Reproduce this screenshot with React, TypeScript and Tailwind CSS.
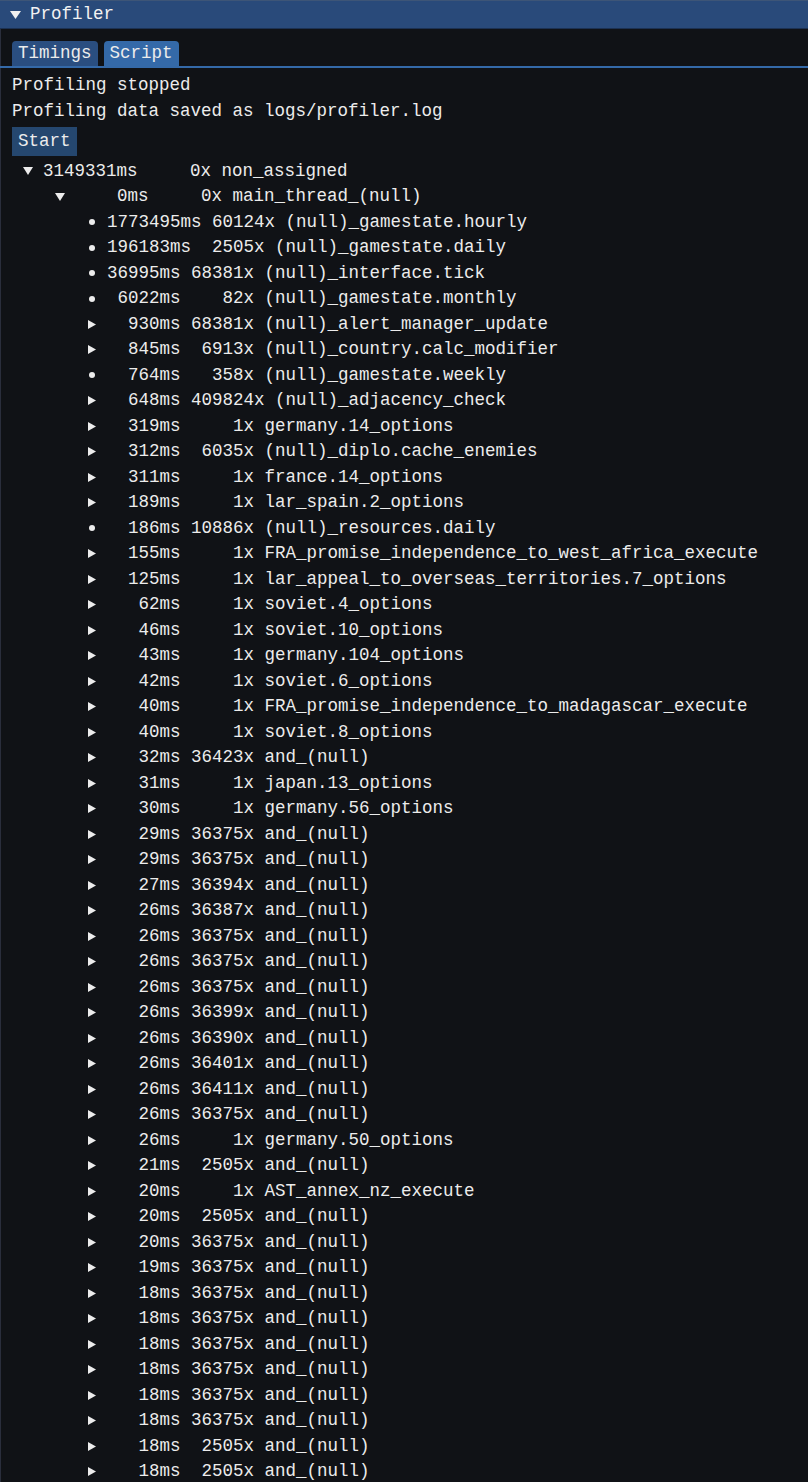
import React from "react";

type Kind = "bullet" | "arrow";
const rows: [Kind, number, number, string][] = [
  ["bullet", 1773495, 60124, "(null)_gamestate.hourly"],
  ["bullet", 196183, 2505, "(null)_gamestate.daily"],
  ["bullet", 36995, 68381, "(null)_interface.tick"],
  ["bullet", 6022, 82, "(null)_gamestate.monthly"],
  ["arrow", 930, 68381, "(null)_alert_manager_update"],
  ["arrow", 845, 6913, "(null)_country.calc_modifier"],
  ["bullet", 764, 358, "(null)_gamestate.weekly"],
  ["arrow", 648, 409824, "(null)_adjacency_check"],
  ["arrow", 319, 1, "germany.14_options"],
  ["arrow", 312, 6035, "(null)_diplo.cache_enemies"],
  ["arrow", 311, 1, "france.14_options"],
  ["arrow", 189, 1, "lar_spain.2_options"],
  ["bullet", 186, 10886, "(null)_resources.daily"],
  ["arrow", 155, 1, "FRA_promise_independence_to_west_africa_execute"],
  ["arrow", 125, 1, "lar_appeal_to_overseas_territories.7_options"],
  ["arrow", 62, 1, "soviet.4_options"],
  ["arrow", 46, 1, "soviet.10_options"],
  ["arrow", 43, 1, "germany.104_options"],
  ["arrow", 42, 1, "soviet.6_options"],
  ["arrow", 40, 1, "FRA_promise_independence_to_madagascar_execute"],
  ["arrow", 40, 1, "soviet.8_options"],
  ["arrow", 32, 36423, "and_(null)"],
  ["arrow", 31, 1, "japan.13_options"],
  ["arrow", 30, 1, "germany.56_options"],
  ["arrow", 29, 36375, "and_(null)"],
  ["arrow", 29, 36375, "and_(null)"],
  ["arrow", 27, 36394, "and_(null)"],
  ["arrow", 26, 36387, "and_(null)"],
  ["arrow", 26, 36375, "and_(null)"],
  ["arrow", 26, 36375, "and_(null)"],
  ["arrow", 26, 36375, "and_(null)"],
  ["arrow", 26, 36399, "and_(null)"],
  ["arrow", 26, 36390, "and_(null)"],
  ["arrow", 26, 36401, "and_(null)"],
  ["arrow", 26, 36411, "and_(null)"],
  ["arrow", 26, 36375, "and_(null)"],
  ["arrow", 26, 1, "germany.50_options"],
  ["arrow", 21, 2505, "and_(null)"],
  ["arrow", 20, 1, "AST_annex_nz_execute"],
  ["arrow", 20, 2505, "and_(null)"],
  ["arrow", 20, 36375, "and_(null)"],
  ["arrow", 19, 36375, "and_(null)"],
  ["arrow", 18, 36375, "and_(null)"],
  ["arrow", 18, 36375, "and_(null)"],
  ["arrow", 18, 36375, "and_(null)"],
  ["arrow", 18, 36375, "and_(null)"],
  ["arrow", 18, 36375, "and_(null)"],
  ["arrow", 18, 36375, "and_(null)"],
  ["arrow", 18, 2505, "and_(null)"],
  ["arrow", 18, 2505, "and_(null)"],
];

const fmt = (ms: number, c: number, name: string) =>
  `${String(ms).padStart(5)}ms ${String(c).padStart(5)}x ${name}`;

const Down = () => (
  <svg width="10" height="8" viewBox="0 0 10 8">
    <polygon points="0,0 10,0 5,8" fill="#ececec" />
  </svg>
);
const Right = () => (
  <svg width="8" height="9" viewBox="0 0 8 9">
    <polygon points="0,0 8,4.5 0,9" fill="#ececec" />
  </svg>
);
const Bullet = () => <div className="w-[6px] h-[6px] rounded-full bg-[#ececec]" />;

function Row({ depth, icon, text }: { depth: 0 | 1 | 2; icon: React.ReactNode; text: string }) {
  const pl = depth === 0 ? "pl-0" : depth === 1 ? "pl-[32px]" : "pl-[64px]";
  return (
    <div className={`flex items-center h-[19.5px] ${pl}`}>
      <div className="w-[31px] h-full flex items-center justify-center">{icon}</div>
      <div className="whitespace-pre leading-[19.5px]">{text}</div>
    </div>
  );
}

export default function App() {
  return (
    <div
      className="relative w-[808px] h-[1482px] overflow-hidden bg-[#101216] text-[#ececec] text-[17.5px] shadow-[inset_1px_0_0_#2a2e3c]"
      style={{ fontFamily: '"Liberation Mono", monospace' }}
    >
      <div className="h-[28px] bg-[#294a7a] border-t border-[#3d5577] flex items-center">
        <div className="w-[30px] flex justify-center">
          <svg width="11" height="8" viewBox="0 0 11 8">
            <polygon points="0,0 11,0 5.5,8" fill="#f0f0f0" />
          </svg>
        </div>
        <span className="leading-[19.5px] text-[#f2f2f2]">Profiler</span>
      </div>
      <div className="h-px bg-[#1c3152]" />
      <div className="pt-[12px]">
        <div className="flex gap-[6px] px-[12px] h-[27px] border-b-2 border-[#3469a8] items-end">
          <div className="h-[25px] px-[6px] bg-[#2a4e80] rounded-t-[4px] leading-[25px]">Timings</div>
          <div className="h-[25px] px-[6px] bg-[#3469a8] rounded-t-[4px] leading-[25px]">Script</div>
        </div>
        <div className="flex flex-col gap-[6px] px-[12px] pt-[8px]">
          <div className="h-[19.5px] leading-[19.5px] whitespace-pre">Profiling stopped</div>
          <div className="h-[19.5px] leading-[19.5px] whitespace-pre">Profiling data saved as logs/profiler.log</div>
          <div className="flex">
            <div className="h-[28.5px] leading-[28.5px] px-[6px] bg-[#25476f]">Start</div>
          </div>
          <Row depth={0} icon={<Down />} text={"3149331ms     0x non_assigned"} />
          <Row depth={1} icon={<Down />} text={fmt(0, 0, "main_thread_(null)")} />
          {rows.map(([k, ms, c, name], i) => (
            <Row key={i} depth={2} icon={k === "bullet" ? <Bullet /> : <Right />} text={fmt(ms, c, name)} />
          ))}
        </div>
      </div>
    </div>
  );
}
